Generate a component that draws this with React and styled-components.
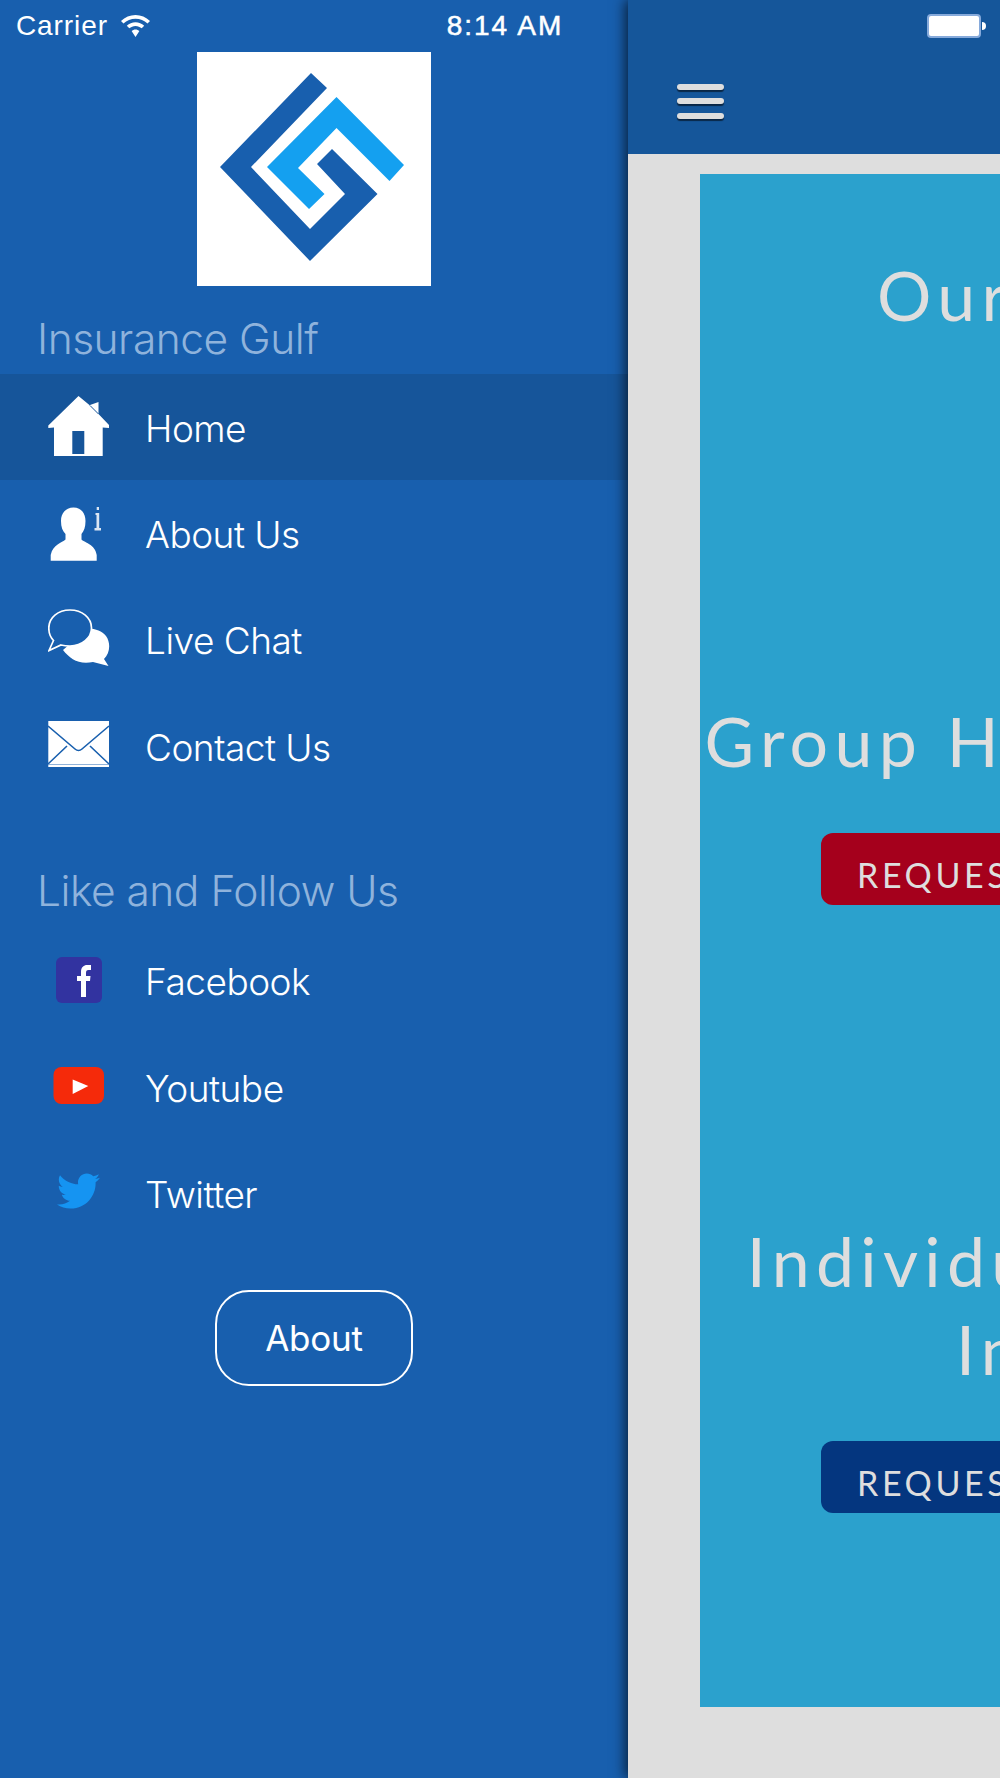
import React from "react"
import styled, { createGlobalStyle } from "styled-components"

const BG = "#185fae"

const GlobalStyle = createGlobalStyle`
  html, body {
    margin: 0;
    padding: 0;
    background: ${BG};
  }
  * {
    box-sizing: border-box;
  }
`

const Screen = styled.div`
  position: relative;
  display: flex;
  width: 1000px;
  height: 1778px;
  overflow: hidden;
  font-family: Inter, "Liberation Sans", sans-serif;
`

// iOS status bar lies over both panels
const StatusBar = styled.div`
  position: absolute;
  top: 0;
  left: 0;
  z-index: 2;
  display: grid;
  grid-template-columns: 1fr auto 1fr;
  align-items: center;
  width: 100%;
  height: 50px;
  padding: 1px 14px 0 16px;
  color: #fff;
  font-family: "Liberation Sans", sans-serif;
  font-size: 28px;
`
const Carrier = styled.div`
  display: flex;
  align-items: center;
  gap: 13px;
  letter-spacing: 0.9px;
`
const Time = styled.div`
  margin-left: 8px;
  letter-spacing: 2px;
  -webkit-text-stroke: 0.5px #fff;
`
const Battery = styled.div`
  justify-self: end;
  display: flex;
  align-items: center;
  gap: 1px;
`
const BatteryBody = styled.div`
  width: 54px;
  height: 24px;
  border: 2px solid #86aadb;
  border-radius: 4px;
  background: #fff;
`
const BatteryTip = styled.div`
  width: 4px;
  height: 8px;
  border-radius: 0 4px 4px 0;
  background: #fff;
`

const Drawer = styled.aside`
  flex: 0 0 628px;
  display: flex;
  flex-direction: column;
  padding-top: 52px;
  background: ${BG};
`
const LogoBox = styled.div`
  align-self: center;
  width: 234px;
  height: 234px;
  background: #fff;
`
const DrawerHeading = styled.h2`
  display: flex;
  align-items: center;
  height: ${(p) => p.$height}px;
  margin: 0;
  padding: ${(p) => p.$top}px 0 0 37px;
  color: #8fb3dc;
  font-size: 42.5px;
  font-weight: 300;
  letter-spacing: -0.5px;
`
const MenuList = styled.nav`
  display: flex;
  flex-direction: column;
`
const MenuRow = styled.a`
  display: flex;
  align-items: center;
  gap: 35px;
  height: 106.4px;
  padding-left: 48px;
  background: ${(p) => (p.$active ? "#16559a" : "transparent")};
  color: #fff;
  font-size: 37px;
  font-weight: 300;
  letter-spacing: -0.5px;
`
const MenuLabel = styled.span`
  padding-top: 2px;
`
const IconSvg = styled.svg`
  flex: 0 0 62px;
  width: 62px;
  height: 62px;
  filter: blur(0.5px);
`
const AboutButton = styled.button`
  align-self: center;
  width: 198px;
  height: 96px;
  margin-top: 43px;
  border: 2px solid #fff;
  border-radius: 34px;
  background: transparent;
  color: #fff;
  font-family: Inter, "Liberation Sans", sans-serif;
  font-size: 35px;
  font-weight: 400;
  letter-spacing: -0.2px;
`

const Main = styled.main`
  flex: 0 0 1000px;
  display: flex;
  flex-direction: column;
  height: 100%;
  background: #dedede;
  box-shadow: -3px 0 12px rgba(0, 0, 0, 0.65);
`
const Header = styled.header`
  display: flex;
  align-items: center;
  flex: 0 0 154px;
  padding: 48px 0 0 49px;
  background: #15569a;
`
const Burger = styled.div`
  display: flex;
  flex-direction: column;
  gap: 8.5px;
`
const BurgerBar = styled.span`
  display: block;
  width: 47px;
  height: 6px;
  border-radius: 3px;
  background: #dedede;
  box-shadow: 0 2px 1px rgba(0, 0, 0, 0.55);
`
const Content = styled.div`
  flex: 1;
  display: flex;
  padding: 20px 72px 71px;
`
const Card = styled.section`
  flex: 1;
  display: flex;
  flex-direction: column;
  align-items: center;
  padding-top: 77px;
  background: #2ba1cd;
`
const Title = styled.h1`
  margin: ${(p) => p.$top}px 0 0;
  color: #dedede;
  font-family: Lato, "Open Sans", sans-serif;
  font-size: 68px;
  font-weight: 400;
  line-height: 88px;
  letter-spacing: 6.3px;
  text-align: center;
`
const QuoteButton = styled.a`
  display: flex;
  align-items: center;
  width: 614px;
  height: 72px;
  margin-top: 48px;
  padding: 10px 0 0 36px;
  border-radius: 12px;
  background: ${(p) => p.$color};
  color: #dedede;
  font-family: Lato, "Open Sans", sans-serif;
  font-size: 34px;
  letter-spacing: 3.6px;
  white-space: nowrap;
`

const Logo = () => (
  <svg width="234" height="234" viewBox="0 0 234 234">
    <polygon
      fill={BG}
      points="114,21 130,36 54,115 113,177 148,142 120,112 135,97 180.5,142 113,209 23,115"
    />
    <polygon
      fill="#14a0f0"
      points="139.5,45 207,113 192.5,129 139.5,76 101,116 127.5,142 112,157 70,115"
    />
  </svg>
)

const HomeIcon = () => (
  <IconSvg viewBox="0 0 62 62">
    <path
      fill="#fff"
      fillRule="evenodd"
      d="M30.5 0 L42 9.5 L42 9 L50.5 6 L50.5 18 L61 29 L61 32 L54.7 31.5 L54.7 60 L6 60 L6 31.5 L0.3 32 L0.3 29.5 Z M24.3 35 L24.3 58 L36.3 58 L36.3 35 Z"
    />
    <path fill="none" stroke="#16559a" strokeWidth="1" d="M42 9.5 L50.5 18" />
  </IconSvg>
)

const AboutIcon = () => (
  <IconSvg viewBox="0 0 62 62">
    <path
      fill="#fff"
      d="M25.5 4.5 C33 4.5 37.5 10 37.5 18 C37.5 24 36 28 33.5 31 L33.5 36.5 C37 40 47 41 48.7 52 L48.7 57.7 L2.7 57.7 L2.7 52 C5 41 14 40 17.5 36.5 L17.5 31 C14.5 28 13 24 13 18 C13 10 18 4.5 25.5 4.5 Z"
    />
    <path
      fill="#dbe6f3"
      d="M48.7 4 H51 V7 H48.7 Z M47.5 10 H51.2 V25 H53 V27.5 H46.5 V25 H48.5 V12 H47.5 Z"
    />
  </IconSvg>
)

const ChatIcon = () => (
  <IconSvg viewBox="0 0 62 62">
    <path
      fill="#fff"
      d="M15 41 C22 50 31 56 45 53 L60.5 57 L56 50 C62 44 63 34 58 27 C54 22 48 20 40 19 Z"
    />
    <path
      fill={BG}
      stroke="#fff"
      strokeWidth="1.7"
      d="M22 1 C34 1 43.5 8.5 43.5 19 C43.5 29 34 37 22 37 C18 37 15 36.5 13 36 L1 41.5 L5.5 31.5 C2 28 0.8 24 0.8 19 C0.8 8.5 10 1 22 1 Z"
    />
  </IconSvg>
)

const MailIcon = () => (
  <IconSvg viewBox="0 0 62 62">
    <rect x="0.3" y="6" width="60.7" height="46" fill="#fff" />
    <path
      fill="none"
      stroke={BG}
      strokeWidth="1.6"
      d="M0 11 L27 34 Q30.5 37 34 34 L61 11 M0 49 L19 31 M61 49 L42 31"
    />
    <path fill="none" stroke={BG} strokeWidth="0.8" opacity="0.6" d="M0.3 49.5 H61" />
  </IconSvg>
)

const FacebookIcon = () => (
  <IconSvg viewBox="0 0 62 62">
    <rect x="8" y="7" width="46" height="46" rx="6" fill="#3233a0" />
    <path
      fill="#fff"
      d="M33 47 V31 H29 V26 H33 V22 C33 17 36 15 39 15 H43 V20 H40.5 C38.5 20 38 21 38 23 V26 H42.5 L42 31 H38 V47 Z"
    />
  </IconSvg>
)

const YoutubeIcon = () => (
  <IconSvg viewBox="0 0 62 62">
    <rect x="5.5" y="11" width="50.5" height="37" rx="8" fill="#f52a0a" />
    <polygon points="24.7,23.5 40.3,30 24.7,38" fill="#fff" />
  </IconSvg>
)

const TwitterIcon = () => (
  <IconSvg viewBox="0 0 62 62">
    <g transform="translate(9 6.5) scale(0.084)">
      <path
        fill="#1594f2"
        d="M459.37 151.716c.325 4.548.325 9.097.325 13.645 0 138.72-105.583 298.558-298.558 298.558-59.452 0-114.68-17.219-161.137-47.106 8.447.974 16.568 1.299 25.34 1.299 49.055 0 94.213-16.568 130.274-44.832-46.132-.975-84.792-31.188-98.112-72.772 6.498.974 12.995 1.624 19.818 1.624 9.421 0 18.843-1.3 27.614-3.573-48.081-9.747-84.143-51.98-84.143-102.985v-1.299c13.969 7.797 30.214 12.67 47.431 13.319-28.264-18.843-46.781-51.005-46.781-87.391 0-19.492 5.197-37.36 14.294-52.954 51.655 63.675 129.3 105.258 216.365 109.807-1.624-7.797-2.599-15.918-2.599-24.04 0-57.828 46.782-104.934 104.934-104.934 30.213 0 57.502 12.67 76.67 33.137 23.715-4.548 46.456-13.32 66.599-25.34-7.798 24.366-24.366 44.833-46.132 57.827 21.117-2.273 41.584-8.122 60.426-16.243-14.292 20.791-32.161 39.308-52.628 54.253z"
      />
    </g>
  </IconSvg>
)

const WifiIcon = () => (
  <svg width="29" height="22" viewBox="0 0 29 22">
    <path
      fill="#fff"
      d="M14.5 0 C20 0 25 2.2 29 6 L26.5 8.6 C23.3 5.6 19 3.7 14.5 3.7 C10 3.7 5.7 5.6 2.5 8.6 L0 6 C4 2.2 9 0 14.5 0 Z M14.5 7.2 C17.8 7.2 20.8 8.5 23.2 10.7 L20.7 13.3 C19 11.8 16.9 10.9 14.5 10.9 C12.1 10.9 10 11.8 8.3 13.3 L5.8 10.7 C8.2 8.5 11.2 7.2 14.5 7.2 Z M14.5 14.4 C16 14.4 17.3 15 18.4 15.9 L14.5 22 L10.6 15.9 C11.7 15 13 14.4 14.5 14.4 Z"
    />
  </svg>
)

const mainMenu = [
  { label: "Home", icon: <HomeIcon />, active: true },
  { label: "About Us", icon: <AboutIcon /> },
  { label: "Live Chat", icon: <ChatIcon /> },
  { label: "Contact Us", icon: <MailIcon /> },
]

const socialMenu = [
  { label: "Facebook", icon: <FacebookIcon /> },
  { label: "Youtube", icon: <YoutubeIcon /> },
  { label: "Twitter", icon: <TwitterIcon /> },
]

const Menu = ({ items }) => (
  <MenuList>
    {items.map((item) => (
      <MenuRow key={item.label} $active={item.active}>
        {item.icon}
        <MenuLabel>{item.label}</MenuLabel>
      </MenuRow>
    ))}
  </MenuList>
)

const App = () => {
  return (
    <Screen>
      <GlobalStyle />
      <StatusBar>
        <Carrier>
          Carrier
          <WifiIcon />
        </Carrier>
        <Time>8:14 AM</Time>
        <Battery>
          <BatteryBody />
          <BatteryTip />
        </Battery>
      </StatusBar>
      <Drawer>
        <LogoBox>
          <Logo />
        </LogoBox>
        <DrawerHeading $height={88} $top={16}>
          Insurance Gulf
        </DrawerHeading>
        <Menu items={mainMenu} />
        <DrawerHeading $height={128} $top={54}>
          Like and Follow Us
        </DrawerHeading>
        <Menu items={socialMenu} />
        <AboutButton>About</AboutButton>
      </Drawer>
      <Main>
        <Header>
          <Burger>
            <BurgerBar />
            <BurgerBar />
            <BurgerBar />
          </Burger>
        </Header>
        <Content>
          <Card>
            <Title $top={0}>Our Insurance</Title>
            <Title $top={358}>Group Health Insurance</Title>
            <QuoteButton $color="#a5001c">REQUEST A QUOTATION</QuoteButton>
            <Title $top={312}>Individual Healthcare Insurance</Title>
            <QuoteButton $color="#04367f">REQUEST A QUOTATION</QuoteButton>
          </Card>
        </Content>
      </Main>
    </Screen>
  )
}

export default App
